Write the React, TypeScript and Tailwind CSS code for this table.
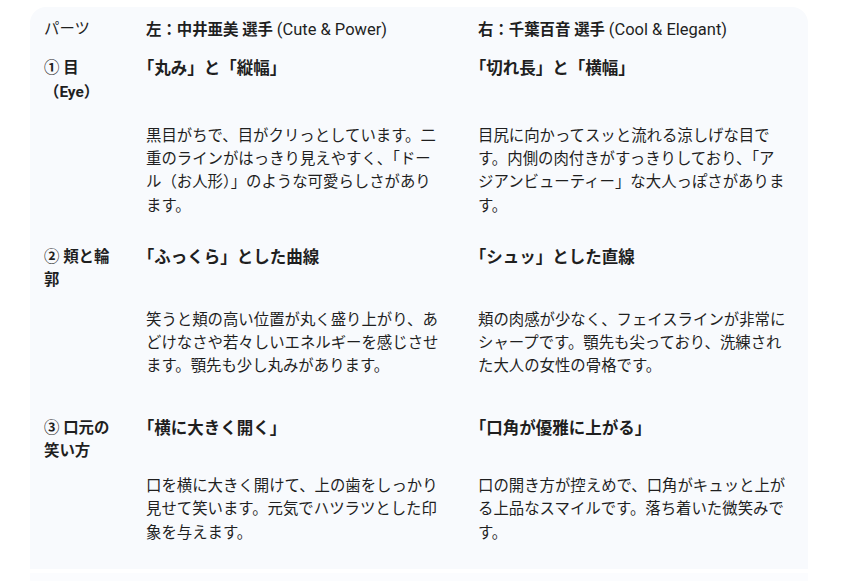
const font = { fontFamily: 'Roboto, "Noto Sans CJK JP", sans-serif' }

type Part = {
  label: string
  left: { title: string; desc: string }
  right: { title: string; desc: string }
  titlePad: string
  descPad: string
}

const parts: Part[] = [
  {
    label: "① 目 （Eye）",
    left: {
      title: "「丸み」と「縦幅」",
      desc: "黒目がちで、目がクリっとしています。二重のラインがはっきり見えやすく、「ドール（お人形）」のような可愛らしさがあります。",
    },
    right: {
      title: "「切れ長」と「横幅」",
      desc: "目尻に向かってスッと流れる涼しげな目です。内側の肉付きがすっきりしており、「アジアンビューティー」な大人っぽさがあります。",
    },
    titlePad: "pt-[8px] pb-[8px]",
    descPad: "pt-[13px] pb-[14px]",
  },
  {
    label: "② 頬と輪郭",
    left: {
      title: "「ふっくら」とした曲線",
      desc: "笑うと頬の高い位置が丸く盛り上がり、あどけなさや若々しいエネルギーを感じさせます。顎先も少し丸みがあります。",
    },
    right: {
      title: "「シュッ」とした直線",
      desc: "頬の肉感が少なく、フェイスラインが非常にシャープです。顎先も尖っており、洗練された大人の女性の骨格です。",
    },
    titlePad: "pt-[14px] pb-[7px]",
    descPad: "pt-[9px] pb-[19px]",
  },
  {
    label: "③ 口元の笑い方",
    left: {
      title: "「横に大きく開く」",
      desc: "口を横に大きく開けて、上の歯をしっかり見せて笑います。元気でハツラツとした印象を与えます。",
    },
    right: {
      title: "「口角が優雅に上がる」",
      desc: "口の開き方が控えめで、口角がキュッと上がる上品なスマイルです。落ち着いた微笑みです。",
    },
    titlePad: "pt-[19px] pb-[7px]",
    descPad: "pt-[5px] pb-[24px]",
  },
]

function Row({ children, pad }: { children: React.ReactNode; pad: string }) {
  return <div className={`grid grid-cols-[98px_334px_1fr] ${pad}`}>{children}</div>
}

const c1 = "pl-[14px] pr-[10px]"
const c2 = "pl-[18px] pr-[20px]"
const c3 = "pl-[16px] pr-[20px]"
const title = "font-bold text-[16.5px] [text-spacing-trim:trim-start]"

export default function App() {
  return (
    <div className="min-h-[581px] bg-white pt-[7px] text-[15.4px] leading-[23.3px] text-[#1f1f1f]" style={font}>
      <div className="ml-[30px] w-[778px] rounded-t-2xl bg-[#f8fafd]">
        {/* Header */}
        <Row pad="pt-[11px] pb-[7px]">
          <div className={c1}>パーツ</div>
          <div className={c2}>
            <span className="font-bold">左：中井亜美 選手</span> <span className="text-[16.5px]">(Cute &amp; Power)</span>
          </div>
          <div className={c3}>
            <span className="font-bold">右：千葉百音 選手</span> <span className="text-[16.5px]">(Cool &amp; Elegant)</span>
          </div>
        </Row>

        {parts.map((p) => (
          <div key={p.label}>
            <Row pad={p.titlePad}>
              <div className={`${c1} font-bold`}>{p.label}</div>
              <div className={c2}>
                <div className={title}>{p.left.title}</div>
              </div>
              <div className={c3}>
                <div className={title}>{p.right.title}</div>
              </div>
            </Row>
            <Row pad={p.descPad}>
              <div className={c1} />
              <div className={c2}>{p.left.desc}</div>
              <div className={c3}>{p.right.desc}</div>
            </Row>
          </div>
        ))}
      </div>
      <div className="ml-[30px] mt-[4px] h-[8px] w-[778px] bg-[#fbfcfe]" />
    </div>
  )
}
